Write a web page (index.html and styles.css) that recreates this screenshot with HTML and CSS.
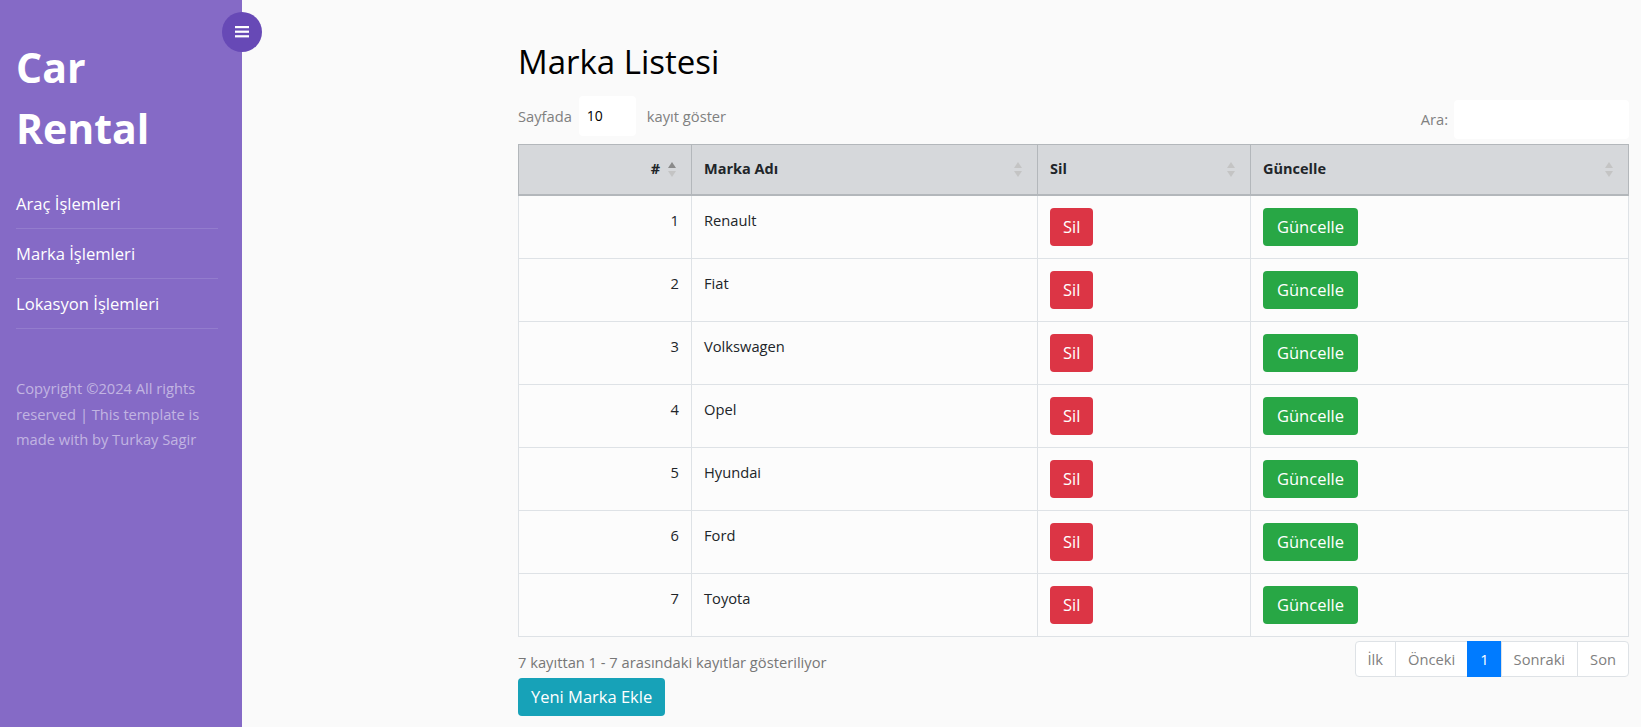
FILE: index.html
```html
<!DOCTYPE html>
<html lang="tr">
<head>
<meta charset="utf-8">
<title>Marka Listesi</title>
<link rel="stylesheet" href="styles.css">
</head>
<body>
<div class="layout">
  <nav class="sidebar">
    <button class="toggle" type="button" aria-label="Menü">
      <svg width="14" height="12" viewBox="0 0 14 12"><rect x="0" y="0" width="14" height="2.2" fill="#fff"/><rect x="0" y="4.6" width="14" height="2.2" fill="#fff"/><rect x="0" y="9.2" width="14" height="2.2" fill="#fff"/></svg>
    </button>
    <h1 class="brand">Car Rental</h1>
    <ul class="menu">
      <li><a href="#">Araç İşlemleri</a></li>
      <li><a href="#">Marka İşlemleri</a></li>
      <li><a href="#">Lokasyon İşlemleri</a></li>
    </ul>
    <p class="copy">Copyright ©2024 All rights reserved | This template is made with by Turkay Sagir</p>
  </nav>
  <main class="content">
    <h2 class="title">Marka Listesi</h2>
    <div class="toolbar">
      <label class="length">Sayfada <span class="field small">10</span> kayıt göster</label>
      <label class="search">Ara: <span class="field wide"></span></label>
    </div>
    <table class="grid">
      <colgroup><col class="c1"><col class="c2"><col class="c3"><col class="c4"></colgroup>
      <thead>
        <tr>
          <th><div class="th-in end"><span>#</span><svg class="sort" width="8" height="15" viewBox="0 0 8 15"><path d="M4 0L8 6H0Z" fill="#8a8a8a"/><path d="M0 9H8L4 15Z" fill="#c4c4c4"/></svg></div></th>
          <th><div class="th-in"><span>Marka Adı</span><svg class="sort" width="8" height="15" viewBox="0 0 8 15"><path d="M4 0L8 6H0Z" fill="#c4c4c4"/><path d="M0 9H8L4 15Z" fill="#c4c4c4"/></svg></div></th>
          <th><div class="th-in"><span>Sil</span><svg class="sort" width="8" height="15" viewBox="0 0 8 15"><path d="M4 0L8 6H0Z" fill="#c4c4c4"/><path d="M0 9H8L4 15Z" fill="#c4c4c4"/></svg></div></th>
          <th><div class="th-in"><span>Güncelle</span><svg class="sort" width="8" height="15" viewBox="0 0 8 15"><path d="M4 0L8 6H0Z" fill="#c4c4c4"/><path d="M0 9H8L4 15Z" fill="#c4c4c4"/></svg></div></th>
        </tr>
      </thead>
      <tbody>
        <tr><td class="num">1</td><td>Renault</td><td><a class="btn red" href="#">Sil</a></td><td><a class="btn green" href="#">Güncelle</a></td></tr>
        <tr><td class="num">2</td><td>Fiat</td><td><a class="btn red" href="#">Sil</a></td><td><a class="btn green" href="#">Güncelle</a></td></tr>
        <tr><td class="num">3</td><td>Volkswagen</td><td><a class="btn red" href="#">Sil</a></td><td><a class="btn green" href="#">Güncelle</a></td></tr>
        <tr><td class="num">4</td><td>Opel</td><td><a class="btn red" href="#">Sil</a></td><td><a class="btn green" href="#">Güncelle</a></td></tr>
        <tr><td class="num">5</td><td>Hyundai</td><td><a class="btn red" href="#">Sil</a></td><td><a class="btn green" href="#">Güncelle</a></td></tr>
        <tr><td class="num">6</td><td>Ford</td><td><a class="btn red" href="#">Sil</a></td><td><a class="btn green" href="#">Güncelle</a></td></tr>
        <tr><td class="num">7</td><td>Toyota</td><td><a class="btn red" href="#">Sil</a></td><td><a class="btn green" href="#">Güncelle</a></td></tr>
      </tbody>
    </table>
    <div class="table-foot">
      <div class="info">7 kayıttan 1 - 7 arasındaki kayıtlar gösteriliyor</div>
      <ul class="pagination">
        <li><a href="#">İlk</a></li>
        <li><a href="#">Önceki</a></li>
        <li class="active"><a href="#">1</a></li>
        <li><a href="#">Sonraki</a></li>
        <li><a href="#">Son</a></li>
      </ul>
    </div>
    <a class="btn teal" href="#">Yeni Marka Ekle</a>
  </main>
</div>
</body>
</html>
```
FILE: styles.css
```css
* { box-sizing: border-box; }
html, body { margin: 0; padding: 0; }
body {
  font-family: "Open Sans", "Liberation Sans", sans-serif;
  font-size: 14.7px;
  line-height: 25px;
  color: #212529;
  background: #fafafa;
}
a { text-decoration: none; }

.layout { display: flex; min-height: 727px; }

.sidebar {
  position: relative;
  flex: 0 0 242px;
  width: 242px;
  background: #856ac6;
  padding: 37px 24px 0 16px;
  color: #fff;
}
.toggle {
  position: absolute;
  top: 12px;
  right: -20px;
  width: 40px;
  height: 40px;
  border: 0;
  border-radius: 50%;
  background: #6749b6;
  display: flex;
  align-items: center;
  justify-content: center;
  padding: 0;
}
.brand {
  margin: 0;
  font-size: 41px;
  line-height: 61px;
  font-weight: 700;
  color: #fff;
}
.menu {
  list-style: none;
  margin: 20px 0 0;
  padding: 0;
}
.menu li { border-bottom: 1px solid rgba(255,255,255,0.12); }
.menu a {
  display: block;
  padding: 12px 0;
  font-size: 16.6px;
  line-height: 25px;
  color: #fff;
}
.copy {
  margin: 47px 0 0;
  width: 212px;
  font-size: 14.7px;
  line-height: 25.5px;
  color: rgba(255,255,255,0.5);
}

.content {
  flex: 1;
  padding: 43px 13px 0 276px;
}
.title {
  margin: 0;
  font-size: 33px;
  line-height: 38px;
  font-weight: 400;
  color: #000;
}
.toolbar {
  display: flex;
  justify-content: space-between;
  align-items: flex-start;
  height: 48px;
  margin-top: 15px;
  color: #808080;
}
.length { display: flex; align-items: center; height: 40px; }
.length .field { margin: 0 11px 0 7px; }
.search { display: flex; align-items: center; margin-top: 4px; }
.search .field { margin-left: 6px; }
.field {
  display: inline-block;
  background: #fff;
  border-radius: 4px;
  color: #000;
  font-size: 14px;
  padding-left: 8px;
}
.field.small { width: 57px; height: 40px; line-height: 40px; }
.field.wide { width: 175px; height: 39px; }

.grid {
  width: 100%;
  border-collapse: collapse;
  table-layout: fixed;
  border: 1px solid #dee2e6;
}
.c1 { width: 173px; }
.c2 { width: 346px; }
.c3 { width: 213px; }
.c4 { width: 378px; }
.grid th {
  background: #d6d8db;
  border: 1px solid #b3b7bb;
  border-bottom-width: 2px;
  padding: 12px 15px 13px 12px;
  font-size: 14.5px;
  line-height: 24px;
  font-weight: 700;
  text-align: left;
  color: #212529;
}
.th-in { display: flex; align-items: center; justify-content: space-between; }
.th-in.end { justify-content: flex-end; gap: 8px; }
.sort { display: block; flex: 0 0 auto; }
.grid td {
  background: #fcfcfc;
  border: 1px solid #dee2e6;
  padding: 12px;
  vertical-align: top;
  line-height: 24px;
  color: #212529;
}
.grid td.num { text-align: right; }

.btn {
  display: inline-block;
  vertical-align: top;
  padding: 6px 12px;
  border: 1px solid transparent;
  border-radius: 4px;
  font-size: 16.5px;
  line-height: 24px;
  color: #fff;
}
.btn.red { background: #dc3545; }
.btn.green { background: #28a745; padding: 6px 13px; }
.btn.teal { background: #17a2b8; margin-top: 1px; }

.table-foot {
  display: flex;
  justify-content: space-between;
  align-items: flex-start;
  margin-top: 4px;
}
.info { padding-top: 9px; line-height: 24px; color: #777; }
.pagination {
  display: flex;
  list-style: none;
  margin: 0;
  padding: 0;
}
.pagination a {
  display: block;
  padding: 8px 12px;
  line-height: 18px;
  border: 1px solid #dee2e6;
  margin-left: -1px;
  background: #fff;
  color: #808080;
}
.pagination li:first-child a { border-radius: 4px 0 0 4px; margin-left: 0; }
.pagination li:last-child a { border-radius: 0 4px 4px 0; }
.pagination .active a { background: #007bff; border-color: #007bff; color: #fff; }
```
